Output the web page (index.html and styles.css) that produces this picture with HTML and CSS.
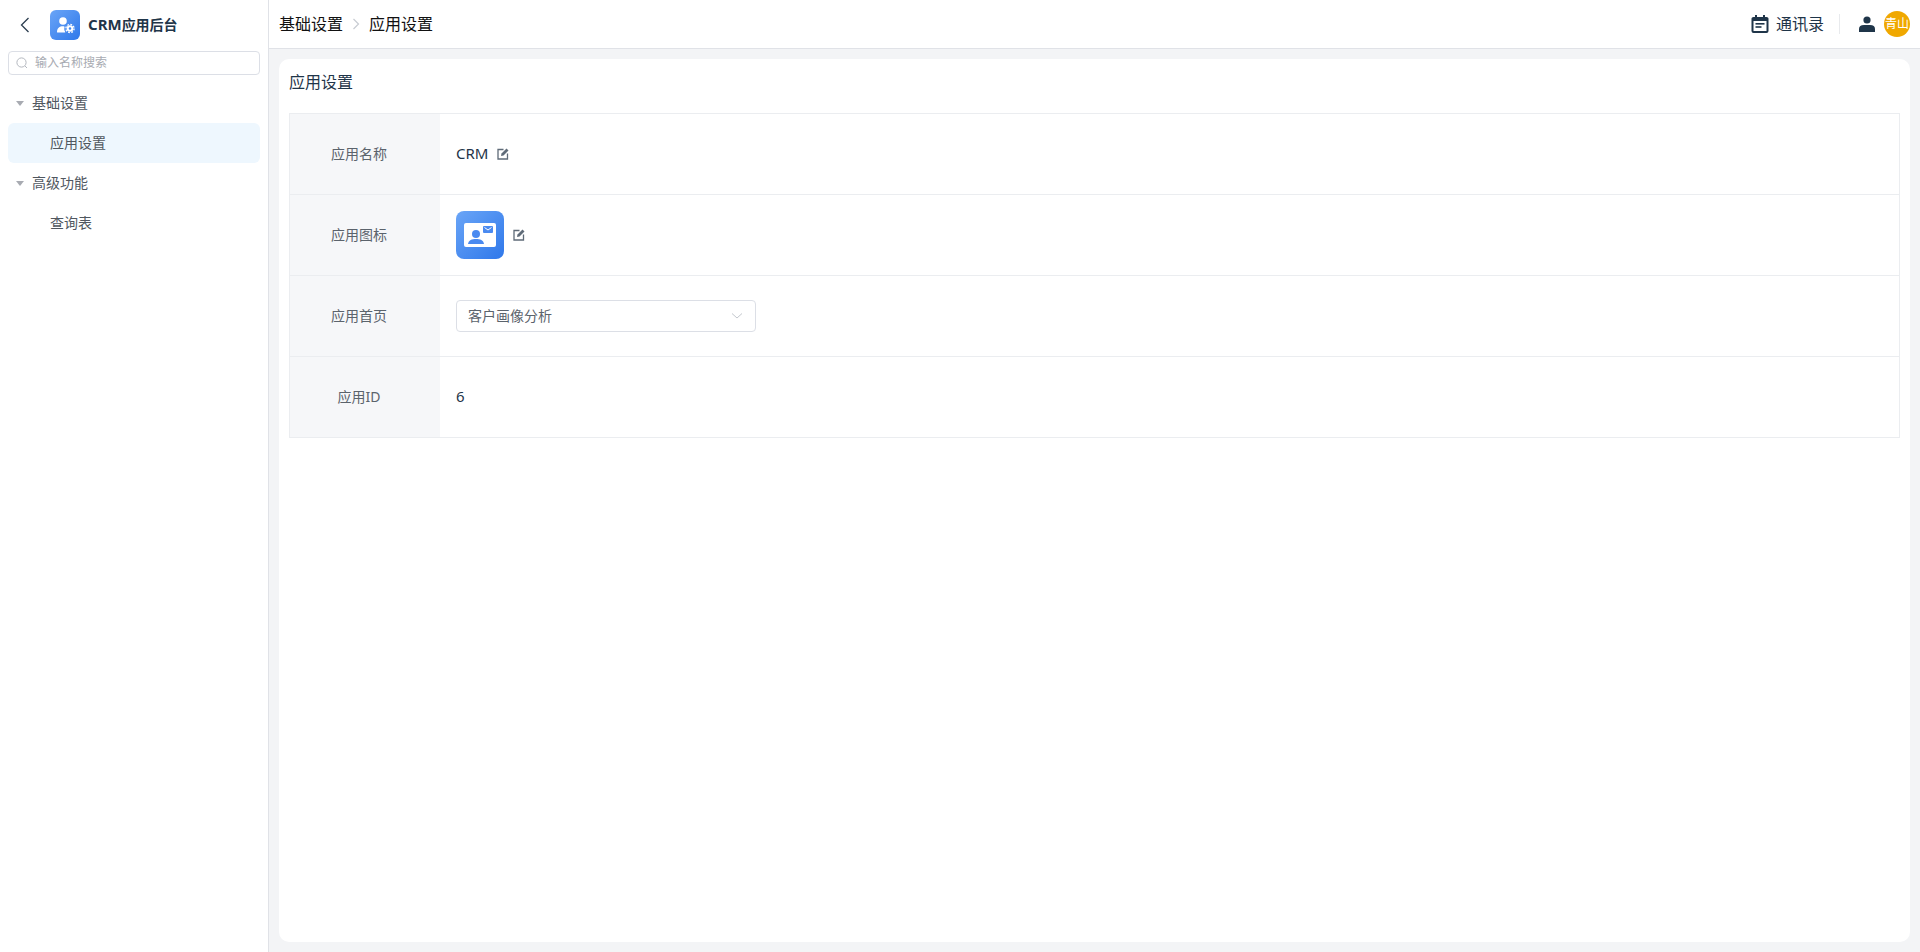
FILE: index.html
```html
<!DOCTYPE html>
<html lang="zh-CN">
<head>
    <meta charset="utf-8"/>
    <title>CRM应用后台 - 应用设置</title>
    <link rel="stylesheet" href="styles.css">
</head>
<body>
<div class="layout">
    <aside class="sidebar">
        <div class="app-head">
            <svg class="back-icon" viewBox="0 0 14 20" width="14" height="20">
                <path d="M10.5 3 L3.5 10 L10.5 17" fill="none" stroke="#2c3e50" stroke-width="1.3"/>
            </svg>
            <div class="app-logo">
                <svg viewBox="0 0 30 30" width="30" height="30">
                    <circle cx="13" cy="11" r="3.8" fill="#fff"/>
                    <path d="M7 22 C7 18 9.500 16.200 13 16.200 C14.200 16.200 14.800 16.500 14.500 17.500 C14 19 14.300 20.500 15.200 21.800 Q15.500 22.500 15 22.500 L7.500 22.500 Q7 22.500 7 22 Z" fill="#fff"/>
                    <circle cx="20" cy="18.500" r="2.300" fill="none" stroke="#fff" stroke-width="2"/>
                    <circle cx="20" cy="18.500" r="4.100" fill="none" stroke="#fff" stroke-width="1.300" stroke-dasharray="1.800 1.400"/>
                </svg>
            </div>
            <span class="app-title"><span class="app-title-latin">CRM</span>应用后台</span>
        </div>
        <div class="search">
            <svg viewBox="0 0 14 14" width="14" height="14">
                <circle cx="6.500" cy="6.500" r="4.600" fill="none" stroke="#b4b8bf" stroke-width="1"/>
                <path d="M10 10 L12 12" stroke="#b4b8bf" stroke-width="1"/>
            </svg>
            <span class="search-text">输入名称搜索</span>
        </div>
        <div class="tree">
            <div class="tree-group"><span class="caret"></span>基础设置</div>
            <div class="tree-item active">应用设置</div>
            <div class="tree-group"><span class="caret"></span>高级功能</div>
            <div class="tree-item">查询表</div>
        </div>
    </aside>
    <div class="main">
        <header class="topbar">
            <div class="crumbs">
                <span>基础设置</span>
                <svg viewBox="0 0 10 14" width="10" height="14">
                    <path d="M2.500 2 L7.500 7 L2.500 12" fill="none" stroke="#c8ccd2" stroke-width="1.200"/>
                </svg>
                <span>应用设置</span>
            </div>
            <div class="top-actions">
                <div class="contacts">
                    <svg viewBox="0 0 18 18" width="18" height="18">
                        <path d="M4 0 H6 V2 H12 V0 H14 V2 H15.500 Q17.500 2 17.500 3.500 V16 Q17.500 18 15.500 18 H2.500 Q0.500 18 0.500 16 V3.500 Q0.500 2 2.500 2 H4 Z" fill="#1f3549"/>
                        <rect x="2.500" y="6" width="13" height="10" fill="#fff"/>
                        <rect x="4.500" y="8" width="9" height="1.600" fill="#1f3549"/>
                        <rect x="4.500" y="11.200" width="6" height="1.600" fill="#1f3549"/>
                    </svg>
                    <span>通讯录</span>
                </div>
                <span class="top-divider"></span>
                <svg class="user-icon" viewBox="0 0 16 16" width="16" height="16">
                    <circle cx="8" cy="4" r="3.600" fill="#1f3549"/>
                    <path d="M0 16 V13 Q0 9 5 9 H11 Q16 9 16 13 V16 Z" fill="#1f3549"/>
                </svg>
                <div class="avatar">青山</div>
            </div>
        </header>
        <main class="content">
            <div class="card">
                <h1 class="card-title">应用设置</h1>
                <div class="info-table">
                    <div class="info-row">
                        <div class="info-label">应用名称</div>
                        <div class="info-value">
                            <span class="value-text">CRM</span>
                            <svg class="edit-icon" viewBox="0 0 12 12" width="12" height="12">
                                <path d="M6.500 1.500 H1 V11 H10.500 V5.500" fill="none" stroke="#5f6b78" stroke-width="1.300"/>
                                <path d="M4 8 L4.500 5.500 L9.500 0.500 L11.500 2.500 L6.500 7.500 Z" fill="#5f6b78"/>
                            </svg>
                        </div>
                    </div>
                    <div class="info-row">
                        <div class="info-label">应用图标</div>
                        <div class="info-value">
                            <div class="big-logo">
                                <svg viewBox="0 0 48 48" width="48" height="48">
                                    <rect x="8" y="12" width="32" height="24" rx="2" fill="#fff"/>
                                    <circle cx="20" cy="23" r="4" fill="#4a8af0"/>
                                    <path d="M12 33 C12.500 29 16 28 20 28 C24 28 27.500 29 28 33 Z" fill="#4a8af0"/>
                                    <rect x="27" y="15" width="10" height="7" rx="1" fill="#4a8af0"/>
                                    <path d="M28.500 16.500 L32 19 L35.500 16.500" fill="none" stroke="#fff" stroke-width="1"/>
                                </svg>
                            </div>
                            <svg class="edit-icon" viewBox="0 0 12 12" width="12" height="12">
                                <path d="M6.500 1.500 H1 V11 H10.500 V5.500" fill="none" stroke="#5f6b78" stroke-width="1.300"/>
                                <path d="M4 8 L4.500 5.500 L9.500 0.500 L11.500 2.500 L6.500 7.500 Z" fill="#5f6b78"/>
                            </svg>
                        </div>
                    </div>
                    <div class="info-row">
                        <div class="info-label">应用首页</div>
                        <div class="info-value">
                            <div class="select">
                                <span>客户画像分析</span>
                                <svg viewBox="0 0 12 8" width="12" height="8">
                                    <path d="M1 1.500 L6 6 L11 1.500" fill="none" stroke="#c4c8ce" stroke-width="1"/>
                                </svg>
                            </div>
                        </div>
                    </div>
                    <div class="info-row">
                        <div class="info-label">应用ID</div>
                        <div class="info-value">
                            <span class="value-text">6</span>
                        </div>
                    </div>
                </div>
            </div>
        </main>
    </div>
</div>
</body>
</html>
```

FILE: styles.css
```css
* {
    box-sizing: border-box;
}

html, body {
    height: 100%;
}

body {
    margin: 0;
    font-family: "Noto Sans", "Noto Sans CJK SC", sans-serif;
    font-size: 14px;
    color: #1f3549;
    background-color: #fff;
}

.layout {
    display: flex;
    height: 952px;
    overflow: hidden;
}

.sidebar {
    width: 269px;
    flex-shrink: 0;
    background-color: #fff;
    border-right: 1px solid #e0e2e7;
    padding: 0 8px;
}

.app-head {
    display: flex;
    align-items: center;
    height: 51px;
    padding: 0 0 1px 10px;
}

.back-icon {
    margin-right: 18px;
}

.app-logo {
    width: 30px;
    height: 30px;
    border-radius: 6px;
    background: linear-gradient(135deg, #6aa5f7, #2f78ea);
    margin-right: 8px;
}

.app-logo svg, .big-logo svg {
    display: block;
}

.app-title {
    font-size: 14px;
    font-weight: 700;
    color: #1f3549;
    padding-bottom: 2px;
}

.app-title-latin {
    font-size: 15px;
}

.search {
    display: flex;
    align-items: center;
    height: 24px;
    width: 252px;
    padding-left: 6px;
    border: 1px solid #dcdfe6;
    border-radius: 4px;
}

.search-text {
    margin-left: 6px;
    font-size: 12px;
    color: #a8abb2;
    padding-bottom: 2px;
}

.tree {
    margin-top: 8px;
}

.tree-group, .tree-item {
    display: flex;
    align-items: center;
    height: 40px;
    width: 252px;
    padding-bottom: 2px;
    color: #50575f;
}

.tree-group {
    padding-left: 24px;
    position: relative;
}

.caret {
    position: absolute;
    left: 8px;
    top: 18px;
    border-left: 4px solid transparent;
    border-right: 4px solid transparent;
    border-top: 5px solid #a8abb2;
}

.tree-item {
    padding-left: 42px;
    border-radius: 6px;
}

.tree-item.active {
    background-color: #eef7fe;
}

.main {
    flex: 1;
    min-width: 0;
    display: flex;
    flex-direction: column;
    background-color: #f3f4f6;
}

.topbar {
    display: flex;
    align-items: center;
    justify-content: space-between;
    height: 49px;
    flex-shrink: 0;
    padding: 0 10px 1px 10px;
    background-color: #fff;
    border-bottom: 1px solid #e0e2e7;
    font-size: 16px;
}

.crumbs {
    display: flex;
    align-items: center;
    gap: 8px;
    color: #111;
}

.crumbs span, .contacts span {
    padding-bottom: 2px;
}

.top-actions {
    display: flex;
    align-items: center;
}

.contacts {
    display: flex;
    align-items: center;
    gap: 7px;
    color: #1f3549;
}

.top-divider {
    width: 1px;
    height: 20px;
    background-color: #e8eaed;
    margin: 0 19px 0 15px;
}

.user-icon {
    margin-right: 9px;
}

.avatar {
    width: 26px;
    height: 26px;
    border-radius: 50%;
    background-color: #f0a800;
    color: #fff;
    font-size: 12px;
    line-height: 25px;
    text-align: center;
    white-space: nowrap;
}

.content {
    flex: 1;
    padding: 10px;
    min-height: 0;
}

.card {
    height: 100%;
    background-color: #fff;
    border-radius: 10px;
    padding: 10px;
}

.card-title {
    margin: 0;
    height: 44px;
    font-size: 16px;
    font-weight: 400;
    line-height: 26px;
    color: #1f3549;
}

.info-table {
    border: 1px solid #ebedf0;
    border-bottom: none;
}

.info-row {
    display: flex;
    height: 81px;
    border-bottom: 1px solid #ebedf0;
}

.info-label {
    width: 150px;
    flex-shrink: 0;
    display: flex;
    align-items: center;
    justify-content: center;
    padding: 0 12px 2px 0;
    background-color: #f6f7f9;
    color: #5b636c;
}

.info-value {
    flex: 1;
    display: flex;
    align-items: center;
    padding-left: 16px;
    color: #1f3549;
}

.value-text {
    font-size: 15px;
    padding-bottom: 3px;
}

.edit-icon {
    margin-left: 9px;
}

.big-logo {
    width: 48px;
    height: 48px;
    border-radius: 8px;
    background: linear-gradient(135deg, #6aa5f7, #2f78ea);
}

.select {
    display: flex;
    align-items: center;
    justify-content: space-between;
    width: 300px;
    height: 32px;
    padding: 0 12px 0 11px;
    border: 1px solid #dcdfe6;
    border-radius: 4px;
    color: #5b636c;
}

.select span {
    padding-bottom: 2px;
}
```
